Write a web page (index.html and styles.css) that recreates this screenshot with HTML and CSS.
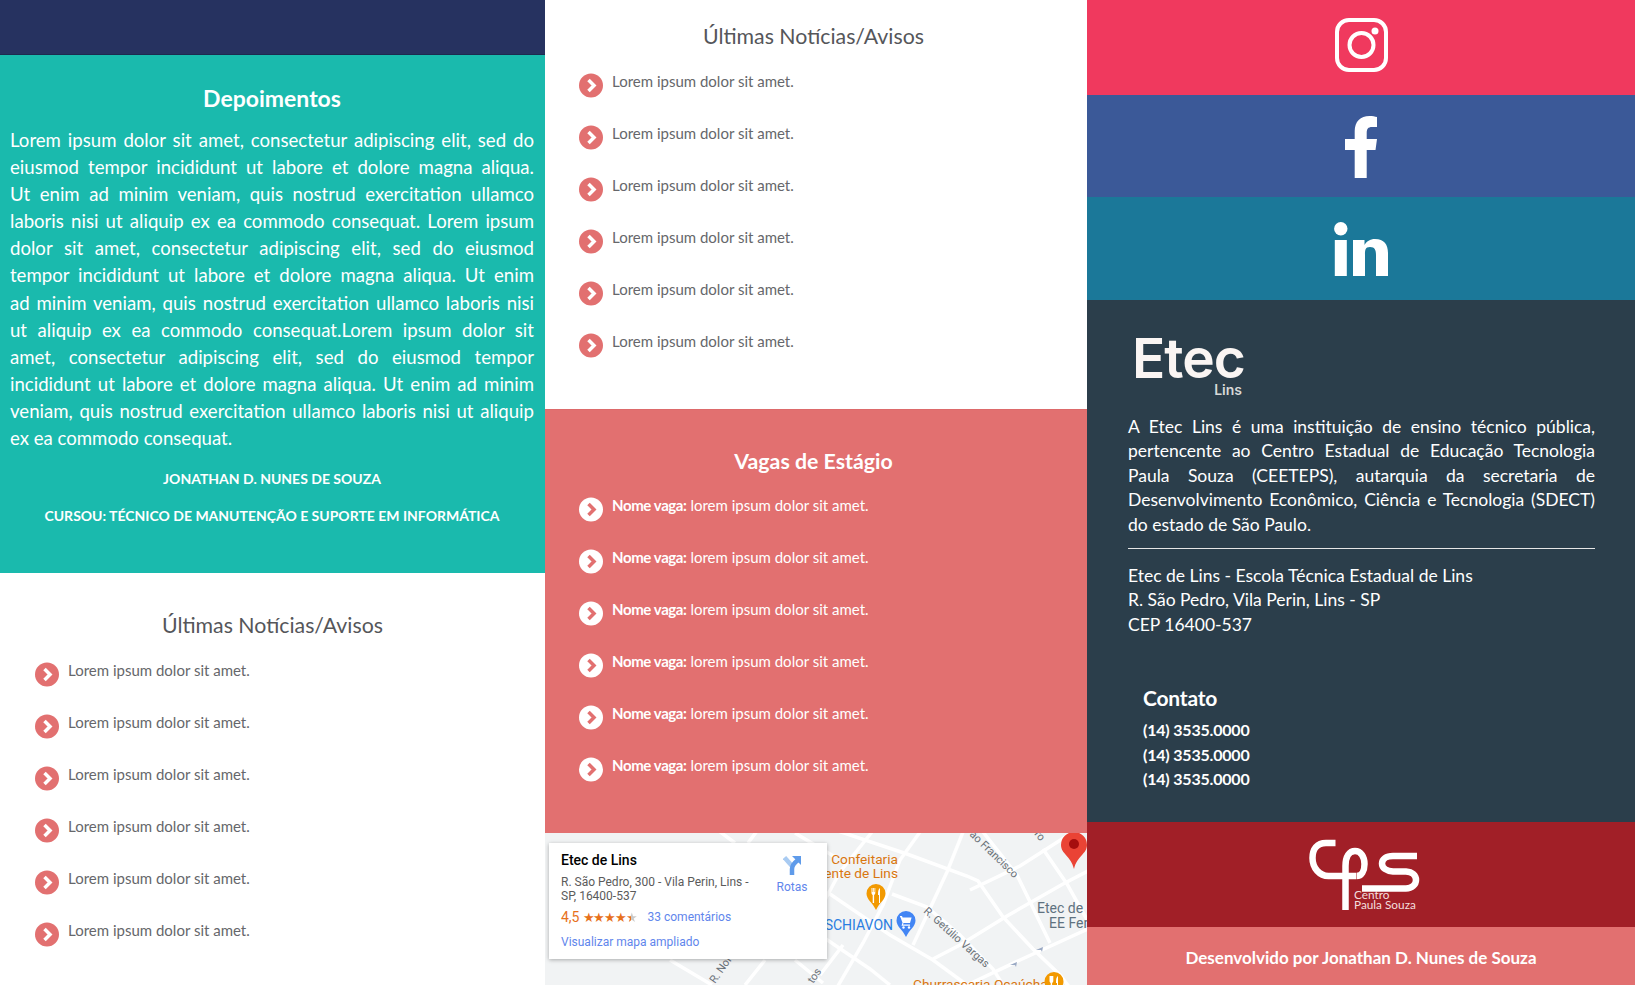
FILE: index.html
```html
<!DOCTYPE html>
<html lang="pt-BR">
<head>
    <meta charset="UTF-8">
    <title>Etec de Lins</title>
    <link rel="stylesheet" href="styles.css">
</head>
<body>
<div class="page">
    <div class="col">
        <div class="top-bar"></div>
        <section class="depoimentos">
            <h2>Depoimentos</h2>
            <p class="texto">Lorem ipsum dolor sit amet, consectetur adipiscing elit, sed do<br>
            eiusmod tempor incididunt ut labore et dolore magna aliqua.<br>
            Ut enim ad minim veniam, quis nostrud exercitation ullamco<br>
            laboris nisi ut aliquip ex ea commodo consequat. Lorem ipsum<br>
            dolor sit amet, consectetur adipiscing elit, sed do eiusmod<br>
            tempor incididunt ut labore et dolore magna aliqua. Ut enim<br>
            ad minim veniam, quis nostrud exercitation ullamco laboris nisi<br>
            ut aliquip ex ea commodo consequat.Lorem ipsum dolor sit<br>
            amet, consectetur adipiscing elit, sed do eiusmod tempor<br>
            incididunt ut labore et dolore magna aliqua. Ut enim ad minim<br>
            veniam, quis nostrud exercitation ullamco laboris nisi ut aliquip</p>
            <p class="texto-fim">ex ea commodo consequat.</p>
            <div class="autor">JONATHAN D. NUNES DE SOUZA</div>
            <div class="autor">CURSOU: TÉCNICO DE MANUTENÇÃO E SUPORTE EM INFORMÁTICA</div>
        </section>
        <section class="lista noticias noticias-baixo">
            <h2>Últimas Notícias/Avisos</h2>
            <ul>
                <li><svg class="seta" viewBox="0 0 24 24"><circle cx="12" cy="12" r="12"/><path d="M9.500 6.500 15 12l-5.500 5.500"/></svg><span>Lorem ipsum dolor sit amet.</span></li>
                <li><svg class="seta" viewBox="0 0 24 24"><circle cx="12" cy="12" r="12"/><path d="M9.500 6.500 15 12l-5.500 5.500"/></svg><span>Lorem ipsum dolor sit amet.</span></li>
                <li><svg class="seta" viewBox="0 0 24 24"><circle cx="12" cy="12" r="12"/><path d="M9.500 6.500 15 12l-5.500 5.500"/></svg><span>Lorem ipsum dolor sit amet.</span></li>
                <li><svg class="seta" viewBox="0 0 24 24"><circle cx="12" cy="12" r="12"/><path d="M9.500 6.500 15 12l-5.500 5.500"/></svg><span>Lorem ipsum dolor sit amet.</span></li>
                <li><svg class="seta" viewBox="0 0 24 24"><circle cx="12" cy="12" r="12"/><path d="M9.500 6.500 15 12l-5.500 5.500"/></svg><span>Lorem ipsum dolor sit amet.</span></li>
                <li><svg class="seta" viewBox="0 0 24 24"><circle cx="12" cy="12" r="12"/><path d="M9.500 6.500 15 12l-5.500 5.500"/></svg><span>Lorem ipsum dolor sit amet.</span></li>
            </ul>
        </section>
    </div>

    <div class="col">
        <section class="lista noticias noticias-cima">
            <h2>Últimas Notícias/Avisos</h2>
            <ul>
                <li><svg class="seta" viewBox="0 0 24 24"><circle cx="12" cy="12" r="12"/><path d="M9.500 6.500 15 12l-5.500 5.500"/></svg><span>Lorem ipsum dolor sit amet.</span></li>
                <li><svg class="seta" viewBox="0 0 24 24"><circle cx="12" cy="12" r="12"/><path d="M9.500 6.500 15 12l-5.500 5.500"/></svg><span>Lorem ipsum dolor sit amet.</span></li>
                <li><svg class="seta" viewBox="0 0 24 24"><circle cx="12" cy="12" r="12"/><path d="M9.500 6.500 15 12l-5.500 5.500"/></svg><span>Lorem ipsum dolor sit amet.</span></li>
                <li><svg class="seta" viewBox="0 0 24 24"><circle cx="12" cy="12" r="12"/><path d="M9.500 6.500 15 12l-5.500 5.500"/></svg><span>Lorem ipsum dolor sit amet.</span></li>
                <li><svg class="seta" viewBox="0 0 24 24"><circle cx="12" cy="12" r="12"/><path d="M9.500 6.500 15 12l-5.500 5.500"/></svg><span>Lorem ipsum dolor sit amet.</span></li>
                <li><svg class="seta" viewBox="0 0 24 24"><circle cx="12" cy="12" r="12"/><path d="M9.500 6.500 15 12l-5.500 5.500"/></svg><span>Lorem ipsum dolor sit amet.</span></li>
            </ul>
        </section>
        <section class="lista vagas">
            <h2>Vagas de Estágio</h2>
            <ul>
                <li><svg class="seta" viewBox="0 0 24 24"><circle cx="12" cy="12" r="12"/><path d="M9.500 6.500 15 12l-5.500 5.500"/></svg><span><b>Nome vaga:</b> lorem ipsum dolor sit amet.</span></li>
                <li><svg class="seta" viewBox="0 0 24 24"><circle cx="12" cy="12" r="12"/><path d="M9.500 6.500 15 12l-5.500 5.500"/></svg><span><b>Nome vaga:</b> lorem ipsum dolor sit amet.</span></li>
                <li><svg class="seta" viewBox="0 0 24 24"><circle cx="12" cy="12" r="12"/><path d="M9.500 6.500 15 12l-5.500 5.500"/></svg><span><b>Nome vaga:</b> lorem ipsum dolor sit amet.</span></li>
                <li><svg class="seta" viewBox="0 0 24 24"><circle cx="12" cy="12" r="12"/><path d="M9.500 6.500 15 12l-5.500 5.500"/></svg><span><b>Nome vaga:</b> lorem ipsum dolor sit amet.</span></li>
                <li><svg class="seta" viewBox="0 0 24 24"><circle cx="12" cy="12" r="12"/><path d="M9.500 6.500 15 12l-5.500 5.500"/></svg><span><b>Nome vaga:</b> lorem ipsum dolor sit amet.</span></li>
                <li><svg class="seta" viewBox="0 0 24 24"><circle cx="12" cy="12" r="12"/><path d="M9.500 6.500 15 12l-5.500 5.500"/></svg><span><b>Nome vaga:</b> lorem ipsum dolor sit amet.</span></li>
            </ul>
        </section>
        <section class="mapa">
            <svg class="mapa-ruas" viewBox="0 0 542 152" preserveAspectRatio="none">
                <g class="ruas">
                    <path d="M174 -2 190 10M212 -2 203 10M250 0 290 24M125 127 167 152M250 127 278 150M220 127 200 152M275 142 298 112"/>
                    <path d="M290 -3 362 21 422 43 433 48 458 84 488 116 515 142 525 155"/>
                    <path d="M282 59 345 102 388 127 422 152"/>
                    <path d="M347 61 382 74 415 102 448 136 458 152"/>
                    <path d="M275 102 325 136 345 152"/>
                    <path d="M438 -1 472 42 505 110"/>
                    <path d="M498 16 522 51 545 92"/>
                    <path d="M327 -1 295 39 275 76"/>
                    <path d="M375 -1 355 27 338 72 318 110 283 170"/>
                    <path d="M418 -1 402 39 368 112"/>
                    <path d="M388 126 415 112 462 83 518 51 545 37"/>
                    <path d="M425 57 475 33 528 -1"/>
                    <path d="M422 152 475 127 545 95"/>
                </g>
                <path class="setinha" d="M491 117l7-3-1 5-1-2zM465 132l7-3-1 5-1-2z"/>
                <g class="rua-nomes">
                    <text x="424" y="2" transform="rotate(44 424 2)">ão Francisco</text>
                    <text x="489" y="1" transform="rotate(52 489 1)">ro</text>
                    <text x="378" y="79" transform="rotate(42 378 79)">R. Getúlio Vargas</text>
                    <text x="170" y="151" transform="rotate(-55 170 151)">R. Nor</text>
                    <text x="268" y="151" transform="rotate(-55 268 151)">tos</text>
                </g>
                <g class="poi-laranja">
                    <text x="353" y="31">Confeitaria</text>
                    <text x="353" y="45">ente de Lins</text>
                    <text x="368" y="156" class="poi-inicio">Churrascaria Ocaúcha</text>
                </g>
                <text class="poi-azul" x="348" y="97">SCHIAVON</text>
                <text class="poi-cinza" x="492" y="80">Etec de</text>
                <text class="poi-cinza" x="504" y="95">EE Fer</text>
                <path class="pino-laranja" d="M331 51a9.500 9.500 0 0 1 9.500 9.500c0 6-6 9-9.500 16.500-3.500-7.500-9.500-10.500-9.500-16.500a9.500 9.500 0 0 1 9.500-9.500z"/>
                <path class="talheres" d="M326.500 55v5c0 1 .8 1.700 1.200 2v8h1.400v-8c.4-.3 1.200-1 1.200-2v-5h-.8v4h-.6v-4h-.8v4h-.6v-4zM335 55c-1.500 1-2 3-2 6v1h1v8h1z"/>
                <path class="pino-azul" d="M361 78a9.500 9.500 0 0 1 9.500 9.500c0 6-6 9-9.500 16.500-3.500-7.500-9.500-10.500-9.500-16.500a9.500 9.500 0 0 1 9.500-9.500z"/>
                <path class="talheres" d="M355 83h2l.6 1.500h9l-1.600 5.500h-6.500l-.5 1.500h7v1.200h-8.500l1-3-2-5.500h-.5z"/>
                <circle class="talheres" cx="358.500" cy="94.500" r="1.200"/><circle class="talheres" cx="364" cy="94.500" r="1.200"/>
                <path class="pino-laranja" d="M509 139a9.500 9.500 0 0 1 9.500 9.500c0 6-6 9-9.500 16.500-3.500-7.500-9.500-10.500-9.500-16.500a9.500 9.500 0 0 1 9.500-9.500z"/>
                <path class="talheres" d="M504.500 143v5c0 1 .8 1.700 1.200 2v4h1.400v-4c.4-.3 1.200-1 1.200-2v-5zM513 143c-1.500 1-2 3-2 6v1h1v4h1z"/>
                <path class="pino-vermelho" d="M529 -1a13 13 0 0 1 13 13c0 9-10 11-13 24-3-13-13-15-13-24a13 13 0 0 1 13-13z"/>
                <circle class="pino-miolo" cx="529" cy="11" r="5"/>
            </svg>
            <div class="mapa-card">
                <div class="mapa-info">
                    <div class="mapa-nome">Etec de Lins</div>
                    <div class="mapa-end">R. São Pedro, 300 - Vila Perin, Lins - SP, 16400-537</div>
                    <div class="mapa-nota"><span class="nota">4,5</span><span class="estrelas">★★★★<span class="meia">★</span></span><span class="coment">33 comentários</span></div>
                    <div class="mapa-link">Visualizar mapa ampliado</div>
                </div>
                <div class="rotas">
                    <svg viewBox="0 0 18 19" width="18" height="19"><path class="rota-a" d="M1.500 1.500 9 10"/><path class="rota-b" d="M9 19v-6c0-4 2-6 6-9"/><path class="rota-seta" d="M9 0h9v9z"/></svg>
                    <span>Rotas</span>
                </div>
            </div>
        </section>
    </div>

    <div class="col">
        <div class="social insta">
            <svg viewBox="0 0 53 54" width="53" height="54"><rect x="2" y="2" width="49" height="50" rx="12"/><circle cx="26.500" cy="27" r="12"/><circle class="cheio" cx="40" cy="13" r="3.500"/></svg>
        </div>
        <div class="social face">
            <svg viewBox="0 0 32 62" width="32" height="62"><path class="cheio" d="M21.700 62V34h8.800L32 23H21.700v-6c0-4 1.300-6 5.300-6h5V1c-2-.5-4.500-1-7.500-1-9 0-14.800 5.500-14.800 15v8H0v11h9.700v28z"/></svg>
        </div>
        <div class="social linked">
            <svg viewBox="0 0 54 54" width="54" height="54"><circle class="cheio" cx="6.800" cy="6.700" r="6.700"/><path class="cheio" d="M.8 18h12v36H.8zM19 18h11.500v5c2-3.500 5.500-6 10.500-6 9 0 13 5.500 13 14v23H42V33c0-4.500-1-8-6-8s-5 3.500-5 8v21H19z"/></svg>
        </div>
        <section class="info">
            <div class="logo-etec">
                <div class="logo-nome">Etec</div>
                <div class="logo-lins">Lins</div>
            </div>
            <p>A Etec Lins é uma instituição de ensino técnico pública, pertencente ao Centro Estadual de Educação Tecnologia Paula Souza (CEETEPS), autarquia da secretaria de Desenvolvimento Econômico, Ciência e Tecnologia (SDECT) do estado de São Paulo.</p>
            <hr>
            <div class="endereco">
                Etec de Lins - Escola Técnica Estadual de Lins<br>
                R. São Pedro, Vila Perin, Lins - SP<br>
                CEP 16400-537
            </div>
            <div class="contato">
                <h3>Contato</h3>
                <div>(14) 3535.0000</div>
                <div>(14) 3535.0000</div>
                <div>(14) 3535.0000</div>
            </div>
        </section>
        <div class="cps">
            <svg viewBox="0 0 130 90" width="130" height="90">
                <path class="cps-traco" d="M39.500 13H30c-9 0-13.500 6-13.500 15 0 10 7 18 16 18H60"/>
                <path class="cps-traco" d="M49.500 80V36c0-10 4-15 9.500-15 6 0 9.500 6 9.500 13 0 7-3 12-8 12"/>
                <path class="cps-traco" d="M121 26H97c-7 0-11 3-11 7.500S90 41 97 41.500h13c6.500.5 10 4 10 8.500s-4 8.500-10 8.500H66"/>
                <text x="58" y="69">Centro<tspan x="58" y="79">Paula Souza</tspan></text>
            </svg>
        </div>
        <div class="creditos">Desenvolvido por Jonathan D. Nunes de Souza</div>
    </div>
</div>
</body>
</html>
```

FILE: styles.css
```css
* {
    box-sizing: border-box;
}
html, body {
    margin: 0;
    height: 100%;
    overflow: hidden;
}
body {
    font-family: Lato, "Open Sans", sans-serif;
    color: #fff;
}
.page {
    display: grid;
    grid-template-columns: 545px 542px 548px;
    height: 985px;
}
.col {
    display: flex;
    flex-direction: column;
    height: 985px;
    overflow: hidden;
}
.col > * {
    flex: none;
}
h2 {
    margin: 0;
    text-align: center;
    font-size: 21.300px;
    font-weight: 400;
}

/* coluna 1 */
.top-bar {
    height: 55px;
    background-color: #263260;
    border-bottom: 1px solid #1d2a4f;
}
.depoimentos {
    height: 518px;
    padding: 29px 11px 0 10px;
    background-color: #1abaad;
    text-align: center;
}
.depoimentos h2 {
    font-weight: 700;
    font-size: 23px;
    line-height: 28px;
    margin-bottom: 15px;
}
.texto,
.texto-fim {
    margin: 0;
    font-size: 18.600px;
    line-height: 27.100px;
    text-align: justify;
}
.texto {
    text-align-last: justify;
}
.texto-fim {
    margin-bottom: 18px;
}
.autor {
    font-size: 14px;
    font-weight: 700;
    line-height: 18px;
    margin-bottom: 19px;
}

/* listas */
.lista ul {
    list-style: none;
    margin: 0;
    padding: 0 0 0 35px;
}
.noticias-cima ul,
.vagas ul {
    padding-left: 34px;
}
.lista li {
    display: flex;
    align-items: flex-start;
    gap: 9px;
    height: 52px;
}
.lista li span {
    font-size: 15px;
    line-height: 20px;
}
.seta {
    width: 24px;
    height: 25px;
    flex: none;
    margin-top: 2px;
}
.seta path {
    fill: none;
    stroke-width: 3.500;
}
.noticias {
    background-color: #fff;
    color: #55565a;
}
.noticias li span {
    color: #66676b;
}
.noticias .seta circle {
    fill: #e27070;
}
.noticias .seta path {
    stroke: #fff;
}
.noticias-baixo {
    flex: 1;
    padding-top: 39px;
}
.noticias-cima {
    height: 409px;
    padding-top: 23px;
}
.noticias-cima h2,
.vagas h2 {
    padding-right: 5px;
}
.noticias h2 {
    height: 26px;
    line-height: 26px;
    margin-bottom: 22px;
}
.vagas {
    height: 424px;
    padding-top: 38px;
    background-color: #e27070;
    border-top: 1px solid #dd6a6b;
}
.vagas h2 {
    font-weight: 700;
    height: 26px;
    line-height: 26px;
    margin-bottom: 21px;
}
.vagas b {
    letter-spacing: -0.4px;
}
.vagas .seta circle {
    fill: #fff;
}
.vagas .seta path {
    stroke: #e27070;
}

/* mapa */
.mapa {
    position: relative;
    flex: 1;
    background-color: #f1f3f4;
    overflow: hidden;
}
.mapa-ruas {
    display: block;
    width: 100%;
    height: 100%;
    font-family: Roboto, sans-serif;
}
.ruas path {
    fill: none;
    stroke: #fff;
    stroke-width: 3.500;
}
.setinha {
    fill: #9aa9c4;
}
.rua-nomes text {
    font-size: 11px;
    fill: #6a7178;
}
.poi-laranja text {
    font-size: 13.700px;
    fill: #d9760f;
    text-anchor: end;
}
.poi-laranja .poi-inicio {
    text-anchor: start;
}
.poi-azul {
    font-size: 14px;
    fill: #2a7de1;
    text-anchor: end;
}
.poi-cinza {
    font-size: 14px;
    fill: #5f7280;
}
.pino-laranja {
    fill: #f29900;
}
.pino-azul {
    fill: #4285f4;
}
.pino-vermelho {
    fill: #ea4335;
}
.pino-miolo {
    fill: #a50e0e;
}
.talheres {
    fill: #fff;
}
.mapa-card {
    position: absolute;
    left: 4px;
    top: 10px;
    width: 278px;
    height: 116px;
    display: flex;
    padding: 8px 12px;
    background-color: #fff;
    box-shadow: 0 1px 4px rgba(0, 0, 0, 0.3);
    font-family: Roboto, sans-serif;
}
.mapa-info {
    width: 190px;
    flex: none;
}
.mapa-nome {
    font-size: 14px;
    font-weight: 500;
    color: #000;
    line-height: 18px;
    margin-bottom: 6px;
}
.mapa-end {
    font-size: 12px;
    line-height: 14px;
    color: #5b5b5b;
}
.mapa-nota {
    display: flex;
    align-items: center;
    margin-top: 6px;
    height: 16px;
    font-size: 12px;
    white-space: nowrap;
}
.nota {
    font-size: 14px;
    color: #e7711b;
    margin-right: 3px;
}
.estrelas {
    font-size: 13px;
    letter-spacing: -1.200px;
    color: #e7711b;
}
.meia {
    background: linear-gradient(90deg, #e7711b 50%, #c9c9c9 50%);
    -webkit-background-clip: text;
    background-clip: text;
    color: transparent;
}
.coment {
    color: #5f86ec;
    margin-left: 11px;
}
.mapa-link {
    margin-top: 10px;
    font-size: 12px;
    line-height: 14px;
    color: #5f86ec;
}
.rotas {
    flex: 1;
    display: flex;
    flex-direction: column;
    align-items: center;
    gap: 5px;
    padding: 5px 0 0 18px;
    font-size: 12px;
    color: #5f86ec;
}
.rotas svg path {
    fill: none;
    stroke-width: 4.500;
}
.rotas svg .rota-a {
    stroke: #a9cbf2;
}
.rotas svg .rota-b {
    stroke: #5f9bea;
}
.rotas svg .rota-seta {
    fill: #5f9bea;
    stroke: none;
}

/* coluna 3 */
.social {
    display: flex;
    align-items: center;
    justify-content: center;
}
.social svg {
    fill: none;
    stroke: #fff;
    stroke-width: 4;
    display: block;
}
.social svg .cheio {
    fill: #fff;
    stroke: none;
}
.insta {
    height: 95px;
    background-color: #f0395e;
    padding-bottom: 5px;
}
.face {
    height: 102px;
    padding-top: 2px;
    background-color: #3b5998;
}
.linked {
    height: 103px;
    background-color: #1b7899;
}
.info {
    height: 522px;
    padding: 33px 40px 0 41px;
    background-color: #2b3e4b;
}
.logo-etec {
    width: 110px;
    margin-left: 4px;
    text-align: right;
    font-family: Inter, sans-serif;
    color: #faf5f3;
}
.logo-nome {
    font-size: 55px;
    font-weight: 600;
    line-height: 50px;
    letter-spacing: -1px;
}
.logo-lins {
    font-size: 14px;
    font-weight: 600;
    line-height: 16px;
    color: #d8d8d8;
    margin-top: -1px;
}
.info p {
    margin: 17px 0 0;
    font-size: 17.500px;
    line-height: 24.400px;
    text-align: justify;
}
.info hr {
    margin: 11px 0 15px;
    border: none;
    border-top: 1px solid #e6e6e6;
}
.endereco {
    font-size: 17.500px;
    line-height: 24.400px;
}
.contato {
    margin: 47px 0 0 15px;
    font-size: 16px;
    font-weight: 700;
    line-height: 24.400px;
    letter-spacing: -0.2px;
}
.contato h3 {
    margin: 0 0 6px;
    font-size: 21px;
    font-weight: 700;
    line-height: 28px;
}
.cps {
    display: flex;
    justify-content: center;
    align-items: center;
    height: 105px;
    background-color: #a11f27;
}
.cps-traco {
    fill: none;
    stroke: #fff;
    stroke-width: 6.500;
}
.cps text {
    font-family: Lato, sans-serif;
    font-size: 11.800px;
    fill: #f3dede;
}
.creditos {
    flex: 1;
    background-color: #e27070;
    text-align: center;
    font-size: 17px;
    font-weight: 700;
    line-height: 62px;
}
```
